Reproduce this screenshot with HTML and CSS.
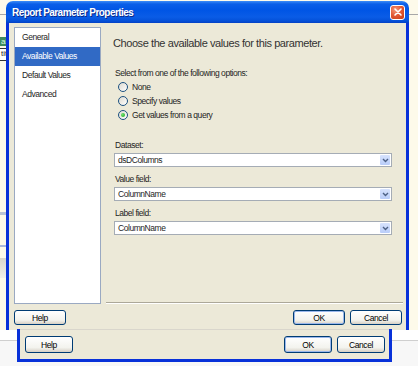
FILE: index.html
```html
<!DOCTYPE html>
<html lang="en">
<head>
    <meta charset="UTF-8">
    <title>Report Parameter Properties</title>
    <link rel="stylesheet" href="styles.css">
</head>
<body>
    <div class="desk">
        <!-- bits of the application behind the dialog -->
        <div class="app-line app-line-top"></div>
        <div class="app-tab app-tab-green">ai</div>
        <div class="app-tab app-tab-box">tit</div>
        <div class="app-band app-band-1"></div>
        <div class="app-band app-band-2"></div>
        <div class="app-band app-band-3"></div>
        <div class="app-bottom"></div>

        <div class="dialog dialog-main">
            <div class="titlebar">
                <span class="title">Report Parameter Properties</span>
                <span class="close-btn">
                    <svg width="10" height="10" viewBox="0 0 10 10"><path d="M2 2 L8 8 M8 2 L2 8" stroke="#fff" stroke-width="1.6" stroke-linecap="round"/></svg>
                </span>
            </div>
            <div class="dlg-body">
                <div class="dlg-main">
                    <ul class="nav">
                        <li>General</li>
                        <li class="active">Available Values</li>
                        <li>Default Values</li>
                        <li>Advanced</li>
                    </ul>
                    <div class="panel">
                        <h1 class="panel-title">Choose the available values for this parameter.</h1>
                        <p class="label">Select from one of the following options:</p>
                        <div class="radio-list">
                            <label class="radio"><span class="radio-dot"></span>None</label>
                            <label class="radio"><span class="radio-dot"></span>Specify values</label>
                            <label class="radio checked"><span class="radio-dot"></span>Get values from a query</label>
                        </div>

                        <p class="label field-label first">Dataset:</p>
                        <div class="select"><span>dsDColumns</span><span class="select-arrow"><svg width="7" height="5" viewBox="0 0 7 5"><path d="M1 1 L3.5 3.5 L6 1" fill="none" stroke="#4d6185" stroke-width="1.4"/></svg></span></div>

                        <p class="label field-label">Value field:</p>
                        <div class="select"><span>ColumnName</span><span class="select-arrow"><svg width="7" height="5" viewBox="0 0 7 5"><path d="M1 1 L3.5 3.5 L6 1" fill="none" stroke="#4d6185" stroke-width="1.4"/></svg></span></div>

                        <p class="label field-label">Label field:</p>
                        <div class="select"><span>ColumnName</span><span class="select-arrow"><svg width="7" height="5" viewBox="0 0 7 5"><path d="M1 1 L3.5 3.5 L6 1" fill="none" stroke="#4d6185" stroke-width="1.4"/></svg></span></div>
                    </div>
                </div>
                <div class="dlg-footer">
                    <button class="btn">Help</button>
                    <div class="btn-group">
                        <button class="btn btn-default">OK</button>
                        <button class="btn">Cancel</button>
                    </div>
                </div>
            </div>
        </div>

        <div class="dialog dialog-ghost">
            <div class="dlg-footer ghost-footer">
                <button class="btn btn-big">Help</button>
                <div class="btn-group">
                    <button class="btn btn-big btn-default">OK</button>
                    <button class="btn btn-big">Cancel</button>
                </div>
            </div>
        </div>
    </div>
</body>
</html>
```

FILE: styles.css
```css
body {
    margin: 0;
    font-family: "Liberation Sans", Arial, sans-serif;
    background-color: #fdfaea;
    color: #1e1e1e;
}

.desk {
    position: relative;
    width: 418px;
    height: 366px;
    overflow: hidden;
}

/* background application */
.app-line-top {
    position: absolute;
    left: 0;
    top: 14px;
    width: 418px;
    height: 1px;
    background-color: #a8a8a8;
}

.app-tab {
    position: absolute;
    left: 0;
    width: 10px;
    font-size: 8px;
    line-height: 9px;
    padding-left: 1px;
}

.app-tab-green {
    top: 37px;
    height: 9px;
    background-color: #3f8a5e;
    color: #dfffdf;
}

.app-tab-box {
    top: 48px;
    height: 11px;
    background-color: #fff;
    border-top: 1px solid #333;
    border-bottom: 1px solid #333;
}

.app-band {
    position: absolute;
    left: 0;
    width: 20px;
}

.app-band-1 {
    top: 212px;
    height: 3px;
    background-color: #b9c4d6;
}

.app-band-2 {
    top: 245px;
    height: 2px;
    background-color: #a9b8dd;
}

.app-band-3 {
    top: 258px;
    height: 20px;
    background: linear-gradient(#d9d6cc, #f2f0ea);
}

.app-bottom {
    position: absolute;
    left: 0;
    top: 330px;
    width: 418px;
    height: 36px;
    background: linear-gradient(#fff 0, #fff 10px, #cfcfcf 10px, #cfcfcf 11px, #f7f7f7 11px);
}

/* dialogs */
.dialog {
    position: absolute;
    display: flex;
    flex-direction: column;
}

.dialog-main {
    left: 6px;
    top: 1px;
    width: 403px;
    height: 329px;
}

.titlebar {
    height: 22px;
    border-radius: 7px 7px 0 0;
    background: linear-gradient(#3c8cf7 0, #0a5ee8 3px, #0055e5 9px, #0a5ce6 16px, #0450d8 20px, #0341c4 22px);
    display: flex;
    align-items: center;
    justify-content: space-between;
    padding: 0 4px 0 6px;
}

.title {
    color: #fff;
    font-size: 10px;
    font-weight: bold;
    letter-spacing: -0.55px;
    text-shadow: 1px 1px 0 #0a2a8a;
}

.close-btn {
    width: 13px;
    height: 13px;
    border: 1px solid #fff;
    border-radius: 3px;
    background: radial-gradient(circle at 35% 30%, #f39a7c, #e35a36 45%, #c43a14);
    display: flex;
    align-items: center;
    justify-content: center;
}

.dlg-body {
    flex-grow: 1;
    background-color: #ece9d8;
    border-left: 3px solid #0831d9;
    border-right: 3px solid #0831d9;
    display: flex;
    flex-direction: column;
}

.dlg-main {
    display: flex;
    height: 281px;
}

.nav {
    list-style: none;
    margin: 4px 0 0 5px;
    padding: 0;
    width: 85px;
    height: 275px;
    background-color: #fff;
    border: 1px solid #9aa9c2;
}

.nav li {
    height: 19px;
    line-height: 19px;
    padding-left: 7px;
    font-size: 8.5px;
    letter-spacing: -0.45px;
}

.nav li.active {
    background-color: #316ac5;
    color: #fff;
}

.panel {
    margin-left: 5px;
    width: 289px;
    padding-left: 8px;
    border-bottom: 1px solid #aca899;
    box-shadow: 0 1px 0 #fff;
    height: 279px;
}

.panel-title {
    margin: 13px 0 0 -1px;
    font-size: 11px;
    line-height: 14px;
    font-weight: normal;
    letter-spacing: -0.42px;
    color: #333;
}

.label {
    margin: 0;
    font-size: 8.5px;
    line-height: 12px;
    letter-spacing: -0.45px;
}

.panel-title + .label {
    margin-top: 17px;
    margin-left: 1px;
}

.radio-list {
    display: flex;
    flex-direction: column;
    margin-top: 1px;
    margin-left: 4px;
}

.radio {
    display: flex;
    align-items: center;
    gap: 4px;
    height: 14px;
    font-size: 8.5px;
    letter-spacing: -0.45px;
}

.radio-dot {
    width: 8px;
    height: 8px;
    border: 1px solid #1c5180;
    border-radius: 50%;
    background: linear-gradient(135deg, #dcd9cf, #fff);
    display: flex;
    align-items: center;
    justify-content: center;
}

.radio.checked .radio-dot::after {
    content: "";
    width: 4px;
    height: 4px;
    border-radius: 50%;
    background: radial-gradient(circle at 35% 35%, #6ee46e, #21a121);
}

.field-label {
    margin-top: 6px;
    margin-left: 1px;
}

.field-label.first {
    margin-top: 17px;
}

.select {
    margin-top: 2px;
    width: 274px;
    height: 12px;
    border: 1px solid #a5acb5;
    background-color: #fff;
    display: flex;
    align-items: center;
    justify-content: space-between;
    font-size: 8.5px;
    letter-spacing: -0.45px;
    padding-left: 3px;
    box-sizing: content-box;
    width: 273px;
}

.select-arrow {
    width: 10px;
    height: 10px;
    margin-right: 1px;
    border-radius: 1px;
    background: linear-gradient(#d7e3fd, #b9cdf9);
    display: flex;
    align-items: center;
    justify-content: center;
}

.dlg-footer {
    display: flex;
    justify-content: space-between;
    padding: 6px 4px 0 5px;
}

.btn-group {
    display: flex;
    gap: 5px;
}

.btn {
    width: 52px;
    height: 15px;
    padding: 0;
    font-family: "Liberation Sans", Arial, sans-serif;
    font-size: 8.5px;
    letter-spacing: -0.4px;
    color: #000;
    border: 1px solid #003c74;
    border-radius: 3px;
    background: linear-gradient(#fff, #f3f3ee 70%, #d6d0c5);
}

.btn-default {
    box-shadow: inset 0 0 0 1px #9bb8ec;
}

.dialog-ghost {
    left: 17px;
    top: 329px;
    width: 369px;
    height: 30px;
    background-color: #ece9d8;
    border-left: 3px solid #0831d9;
    border-right: 3px solid #0831d9;
    border-bottom: 3px solid #0831d9;
}

.ghost-footer {
    border-top: 1px solid #d9d6cc;
    padding: 6px 4px 0 5px;
}

.btn-big {
    width: 48px;
    height: 17px;
}
```
